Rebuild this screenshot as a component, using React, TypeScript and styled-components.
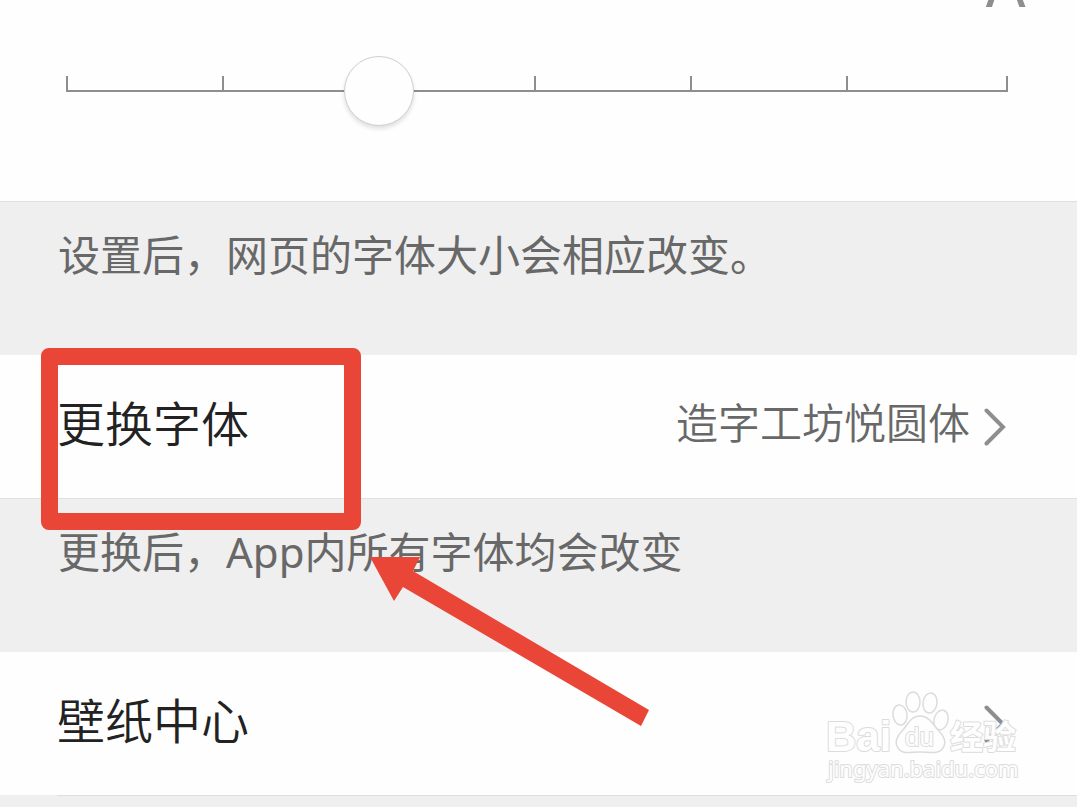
import React from 'react';
import styled, { createGlobalStyle } from 'styled-components';

const GlobalStyle = createGlobalStyle`
  * {
    box-sizing: border-box;
  }
  body {
    margin: 0;
    background: #efefef;
    font-family: "Noto Sans", "Noto Sans CJK SC", sans-serif;
  }
`;

const Page = styled.main`
  position: relative;
  overflow: hidden;
  min-height: 100vh;
`;

const SizePanel = styled.section`
  height: 201px;
  background: #fefefe;
`;

const ScaleLabels = styled.div`
  display: flex;
  align-items: flex-end;
  justify-content: flex-end;
  height: 8px;
  padding-right: 50px;
`;

const LargeLabel = styled.span`
  color: #8e8e8e;
  font-family: Inter, sans-serif;
  font-size: 62px;
  font-weight: 400;
  line-height: 46px;
`;

const Slider = styled.div`
  display: grid;
  align-items: center;
  margin-top: 48px;
  padding: 0 35px 0 32px;
`;

const Ticks = styled.div`
  grid-area: 1 / 1;
  display: grid;
  grid-template-columns: repeat(5, 156fr) 160fr;
  height: 16px;
  margin: 0 34px 14px;
  border-right: 2px solid #8e8e8e;
  border-bottom: 2px solid #8e8e8e;
`;

const Tick = styled.span`
  border-left: 2px solid #8e8e8e;
`;

const Range = styled.input`
  grid-area: 1 / 1;
  appearance: none;
  height: 70px;
  margin: 0 4px 0 0;
  background: transparent;
  cursor: pointer;

  &::-webkit-slider-thumb {
    appearance: none;
    width: 70px;
    height: 70px;
    border: 1px solid #cfcfcf;
    border-radius: 50%;
    background: #fefefe;
    box-shadow: 0 3px 4px rgba(0, 0, 0, 0.12);
  }
`;

const Note = styled.div`
  position: relative;
  height: 154px;
  padding: 23px 58px 0;
  border-top: 1px solid #e0e0e0;
  background: #efefef;
`;

const NoteText = styled.p`
  margin: 0;
  color: #686868;
  font-size: 42px;
  line-height: 60px;
`;

const Item = styled.div`
  position: relative;
`;

const Row = styled.button`
  display: flex;
  align-items: center;
  width: 100%;
  height: 143px;
  padding: 0 71px 0 57px;
  border: 0;
  background: #fefefe;
  font-family: "Noto Sans CJK SC", sans-serif;
  font-weight: 350;
  text-align: left;
  cursor: pointer;
`;

const RowTitle = styled.span`
  flex: 1;
  padding-bottom: 12px;
  color: #222;
  font-size: 48px;
  line-height: 70px;
`;

const RowValue = styled.span`
  margin-right: 14px;
  padding-bottom: 12px;
  color: #686868;
  font-size: 42px;
  line-height: 60px;
`;

const Divider = styled.hr`
  height: 1px;
  margin: 0 0 0 57px;
  border: 0;
  background: #dedede;
`;

const Highlight = styled.div`
  position: absolute;
  z-index: 1;
  top: -7px;
  left: 41px;
  width: 320px;
  height: 182px;
  border: 17px solid #e94638;
  border-radius: 8px;
  pointer-events: none;
`;

const Arrow = styled.svg`
  position: absolute;
  z-index: 1;
  top: 58px;
  left: 370px;
  pointer-events: none;
`;

const Watermark = styled.svg`
  position: absolute;
  right: 52px;
  bottom: 8px;
  pointer-events: none;
`;

function Chevron() {
  return (
    <svg width="22" height="38" viewBox="0 0 22 38" fill="none" aria-hidden="true">
      <path d="M2.5 2.5 19 19 2.5 35.5" stroke="#8e8e8e" strokeWidth="4" strokeLinecap="round" strokeLinejoin="miter" />
    </svg>
  );
}

function BaiduMark() {
  return (
    <Watermark width="200" height="110" viewBox="0 0 200 110" role="img" aria-label="Baidu 经验">
      <g fill="#fefefe" fillOpacity="0.8" stroke="#dcdcdc" strokeWidth="1.5">
        <ellipse cx="88" cy="24" rx="7" ry="10" />
        <ellipse cx="105" cy="25" rx="7" ry="10" transform="rotate(8 105 25)" />
        <ellipse cx="75" cy="37" rx="7" ry="10" transform="rotate(-8 75 37)" />
        <ellipse cx="116" cy="42" rx="7" ry="10" transform="rotate(14 116 42)" />
        <path d="M95 38c9 0 13 8 18 14 6 6 9 12 5 18-4 7-13 4-23 4s-18 3-22-4c-4-6-1-12 5-18 5-6 8-14 17-14Z" />
      </g>
      <g fill="#fefefe" stroke="#dcdcdc" strokeWidth="2" strokeLinejoin="round" paintOrder="stroke">
        <text x="1" y="73" fontFamily="Liberation Sans, sans-serif" fontWeight="700" fontSize="42">Bai</text>
        <text x="80" y="68" fontFamily="Liberation Sans, sans-serif" fontWeight="400" fontSize="26">du</text>
        <text x="125" y="71" fontFamily="Noto Sans CJK SC, sans-serif" fontWeight="700" fontSize="33">经验</text>
        <text x="3" y="99" fontFamily="Noto Sans, sans-serif" fontSize="22">jingyan.baidu.com</text>
      </g>
    </Watermark>
  );
}

export default function App() {
  return (
    <>
      <GlobalStyle />
      <Page>
        <SizePanel>
          <ScaleLabels>
            <LargeLabel>A</LargeLabel>
          </ScaleLabels>
          <Slider>
            <Ticks>
              {[0, 1, 2, 3, 4, 5].map((step) => (
                <Tick key={step} />
              ))}
            </Ticks>
            <Range type="range" min={0} max={6} step={1} defaultValue={2} aria-label="字体大小" />
          </Slider>
        </SizePanel>
        <Note>
          <NoteText>设置后，网页的字体大小会相应改变。</NoteText>
        </Note>
        <Item>
          <Row type="button">
            <RowTitle>更换字体</RowTitle>
            <RowValue>造字工坊悦圆体</RowValue>
            <Chevron />
          </Row>
          <Highlight />
        </Item>
        <Note>
          <NoteText>更换后，App内所有字体均会改变</NoteText>
          <Arrow width="280" height="170" viewBox="0 0 280 170" aria-hidden="true">
            <path d="M0 0H50L43 14 279 153 271 169 33 30 24 44Z" fill="#e94638" />
          </Arrow>
        </Note>
        <Item>
          <Row type="button">
            <RowTitle>壁纸中心</RowTitle>
            <Chevron />
          </Row>
          <Divider />
          <BaiduMark />
        </Item>
      </Page>
    </>
  );
}
